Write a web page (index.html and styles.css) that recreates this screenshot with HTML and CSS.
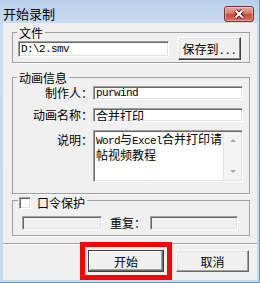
FILE: index.html
```html
<!DOCTYPE html>
<html>
<head>
  <title>开始录制</title>
  <link rel="stylesheet" href="styles.css">
</head>
<body>
  <div class="window">
    <div class="titlebar">
      <span class="title">开始录制</span>
      <span class="close-btn">
        <svg width="14" height="10" viewBox="0 0 14 10">
          <path d="M3.5 1.5 L10.5 8.5 M10.5 1.5 L3.5 8.5" stroke="#5c1810" stroke-width="4"/>
          <path d="M3.5 1.5 L10.5 8.5 M10.5 1.5 L3.5 8.5" stroke="#fff" stroke-width="2"/>
        </svg>
      </span>
    </div>

    <div class="client">
      <fieldset class="group group-file">
        <legend>文件</legend>
        <div class="file-row">
          <input type="text" class="textbox mono file-path" value="D:\2.smv">
          <button class="btn btn-save">保存到<span class="mono">...</span></button>
        </div>
      </fieldset>

      <fieldset class="group group-info">
        <legend>动画信息</legend>
        <div class="info-grid">
          <label class="field-label" for="author">制作人：</label>
          <input type="text" id="author" class="textbox mono" value="purwind">

          <label class="field-label" for="title">动画名称：</label>
          <input type="text" id="title" class="textbox" value="合并打印">

          <label class="field-label memo-label">说明：</label>
          <div class="memo">
            <div class="memo-text"><span class="mono">Word</span>与<span class="mono">Excel</span>合并打印请<br>帖视频教程</div>
            <div class="memo-scroll">
              <span class="arrow-up"></span>
              <span class="arrow-down"></span>
            </div>
          </div>
        </div>
      </fieldset>

      <fieldset class="group group-pass">
        <legend class="check-legend"><span class="checkbox"></span>口令保护</legend>
        <div class="pass-row">
          <input type="password" class="textbox pass-input" disabled>
          <span class="repeat-label">重复：</span>
          <input type="password" class="textbox repeat-input" disabled>
        </div>
      </fieldset>

      <div class="separator"></div>

      <div class="actions">
        <div class="highlight">
          <button class="btn btn-start">开始</button>
        </div>
        <button class="btn btn-cancel">取消</button>
      </div>
    </div>
  </div>
</body>
</html>
```

FILE: styles.css
```css
body {
  margin: 0;
  padding: 0;
  font-family: "Noto Sans CJK SC", sans-serif;
  font-size: 12px;
  color: #000;
  background: #fff;
}

.window {
  width: 260px;
  height: 283px;
  background: linear-gradient(#b9cfe9, #cadcf1 23px, #c4d8ef);
  box-shadow: inset -1px 0 0 #4a9fe0, inset 0 -1px 0 #4a9fe0;
}

.titlebar {
  height: 23px;
  box-sizing: border-box;
  padding: 4px 6px 0 3px;
  display: flex;
  align-items: center;
  justify-content: space-between;
}

.title {
  font-size: 13px;
  line-height: 16px;
}

.close-btn {
  width: 30px;
  height: 16px;
  box-sizing: border-box;
  border: 1px solid #7e3129;
  border-radius: 3px;
  background: linear-gradient(#e9aca2, #d77a6c 45%, #c44a3c 50%, #d16f62);
  box-shadow: inset 0 0 0 1px rgba(255, 255, 255, 0.35);
  display: flex;
  align-items: center;
  justify-content: center;
}

.client {
  margin: 0 3px;
  height: 257px;
  box-sizing: border-box;
  padding: 3px 7px 0 9px;
  background: #f0f0f0;
  display: flex;
  flex-direction: column;
}

.mono {
  font-family: "Liberation Mono", monospace;
  font-size: 11px;
  letter-spacing: -0.6px;
}

/* group boxes */
.group {
  margin: 0;
  padding: 0;
  min-width: 0;
  border: 1px solid #a0a0a0;
  box-shadow: 1px 1px 0 #fff;
}

.group legend {
  margin-left: 4px;
  padding: 0 2px;
  line-height: 13px;
}

.group-info {
  margin-top: 8px;
}

.group-pass {
  margin-top: -2px;
}

.group .check-legend {
  display: flex;
  align-items: center;
  margin-left: 5px;
  padding: 5px 2px 0 1px;
  line-height: 12px;
}

/* text boxes and buttons */
.textbox {
  box-sizing: border-box;
  margin: 0;
  padding: 0 2px;
  border: 1px solid;
  border-color: #a0a0a0 #fff #fff #a0a0a0;
  box-shadow: inset 1px 1px 0 #696969, inset -1px -1px 0 #e3e3e3;
  background: #fff;
  font-family: "Noto Sans CJK SC", sans-serif;
  font-size: 12px;
  color: #000;
  outline: none;
}

.textbox.mono {
  font-family: "Liberation Mono", monospace;
  font-size: 11px;
}

.textbox:disabled {
  background: #f0f0f0;
}

.btn {
  box-sizing: border-box;
  margin: 0;
  padding: 0;
  height: 22px;
  border: 1px solid;
  border-color: #fff #696969 #696969 #fff;
  box-shadow: inset -1px -1px 0 #a0a0a0, inset 1px 1px 0 #e3e3e3;
  background: #f0f0f0;
  font-family: "Noto Sans CJK SC", sans-serif;
  font-size: 12px;
  color: #000;
}

/* file group */
.file-row {
  display: flex;
  align-items: center;
  gap: 9px;
  margin-top: -2px;
  padding: 0 8px 2px 5px;
}

.file-path {
  width: 151px;
  height: 16px;
}

.btn-save {
  width: 63px;
  height: 23px;
  border-color: #fff #404040 #404040 #fff;
  box-shadow: inset -1px -1px 0 #808080, inset 1px 1px 0 #e3e3e3;
}

/* info group */
.info-grid {
  display: grid;
  grid-template-columns: 80px 150px;
  row-gap: 8px;
  padding: 2px 6px 11px 0;
}

.info-grid .textbox {
  height: 14px;
  width: 150px;
}

.field-label {
  text-align: right;
  line-height: 14px;
  align-self: center;
}

.memo-label {
  align-self: start;
  padding-top: 3px;
}

.memo {
  height: 52px;
  box-sizing: border-box;
  border: 1px solid;
  border-color: #a0a0a0 #fff #fff #a0a0a0;
  box-shadow: inset 1px 1px 0 #696969, inset -1px -1px 0 #e3e3e3;
  background: #fff;
  display: flex;
}

.memo-text {
  flex: 1;
  min-width: 0;
  overflow: hidden;
  white-space: nowrap;
  padding: 1px 0 0 2px;
  line-height: 13px;
}

.memo-scroll {
  width: 17px;
  margin: 1px 1px 1px 0;
  background: #f3f3f3;
  border-left: 1px solid #e6e6e6;
  display: flex;
  flex-direction: column;
  align-items: center;
  justify-content: space-between;
  padding: 7px 0;
}

.arrow-up {
  width: 0;
  height: 0;
  border-left: 3px solid transparent;
  border-right: 3px solid transparent;
  border-bottom: 3px solid #a8a8a8;
}

.arrow-down {
  width: 0;
  height: 0;
  border-left: 3px solid transparent;
  border-right: 3px solid transparent;
  border-top: 3px solid #a8a8a8;
}

/* password group */
.checkbox {
  width: 12px;
  height: 12px;
  box-sizing: border-box;
  margin-right: 6px;
  border: 1px solid;
  border-color: #a0a0a0 #fff #fff #a0a0a0;
  box-shadow: inset 1px 1px 0 #696969, inset -1px -1px 0 #e3e3e3;
  background: #fff;
}

.pass-row {
  display: flex;
  align-items: center;
  padding: 7px 11px 5px 9px;
}

.pass-row .textbox {
  height: 14px;
}

.pass-input {
  width: 80px;
}

.repeat-label {
  margin: 0 4px 0 8px;
  line-height: 14px;
}

.repeat-input {
  width: 88px;
}

/* bottom buttons */
.separator {
  margin: 7px -7px 0 -9px;
  border-top: 1px solid #a0a0a0;
  border-bottom: 1px solid #fff;
}

.actions {
  display: flex;
  justify-content: flex-end;
  align-items: center;
  margin: -3px 1px 0 0;
}

.highlight {
  border: 5px solid #ff0000;
  padding: 3px;
}

.btn-start {
  display: block;
  width: 76px;
  border-color: #404040;
  box-shadow: inset -1px -1px 0 #696969, inset 1px 1px 0 #fff, inset -2px -2px 0 #a0a0a0;
}

.btn-cancel {
  width: 73px;
  margin-left: 4px;
}
```
